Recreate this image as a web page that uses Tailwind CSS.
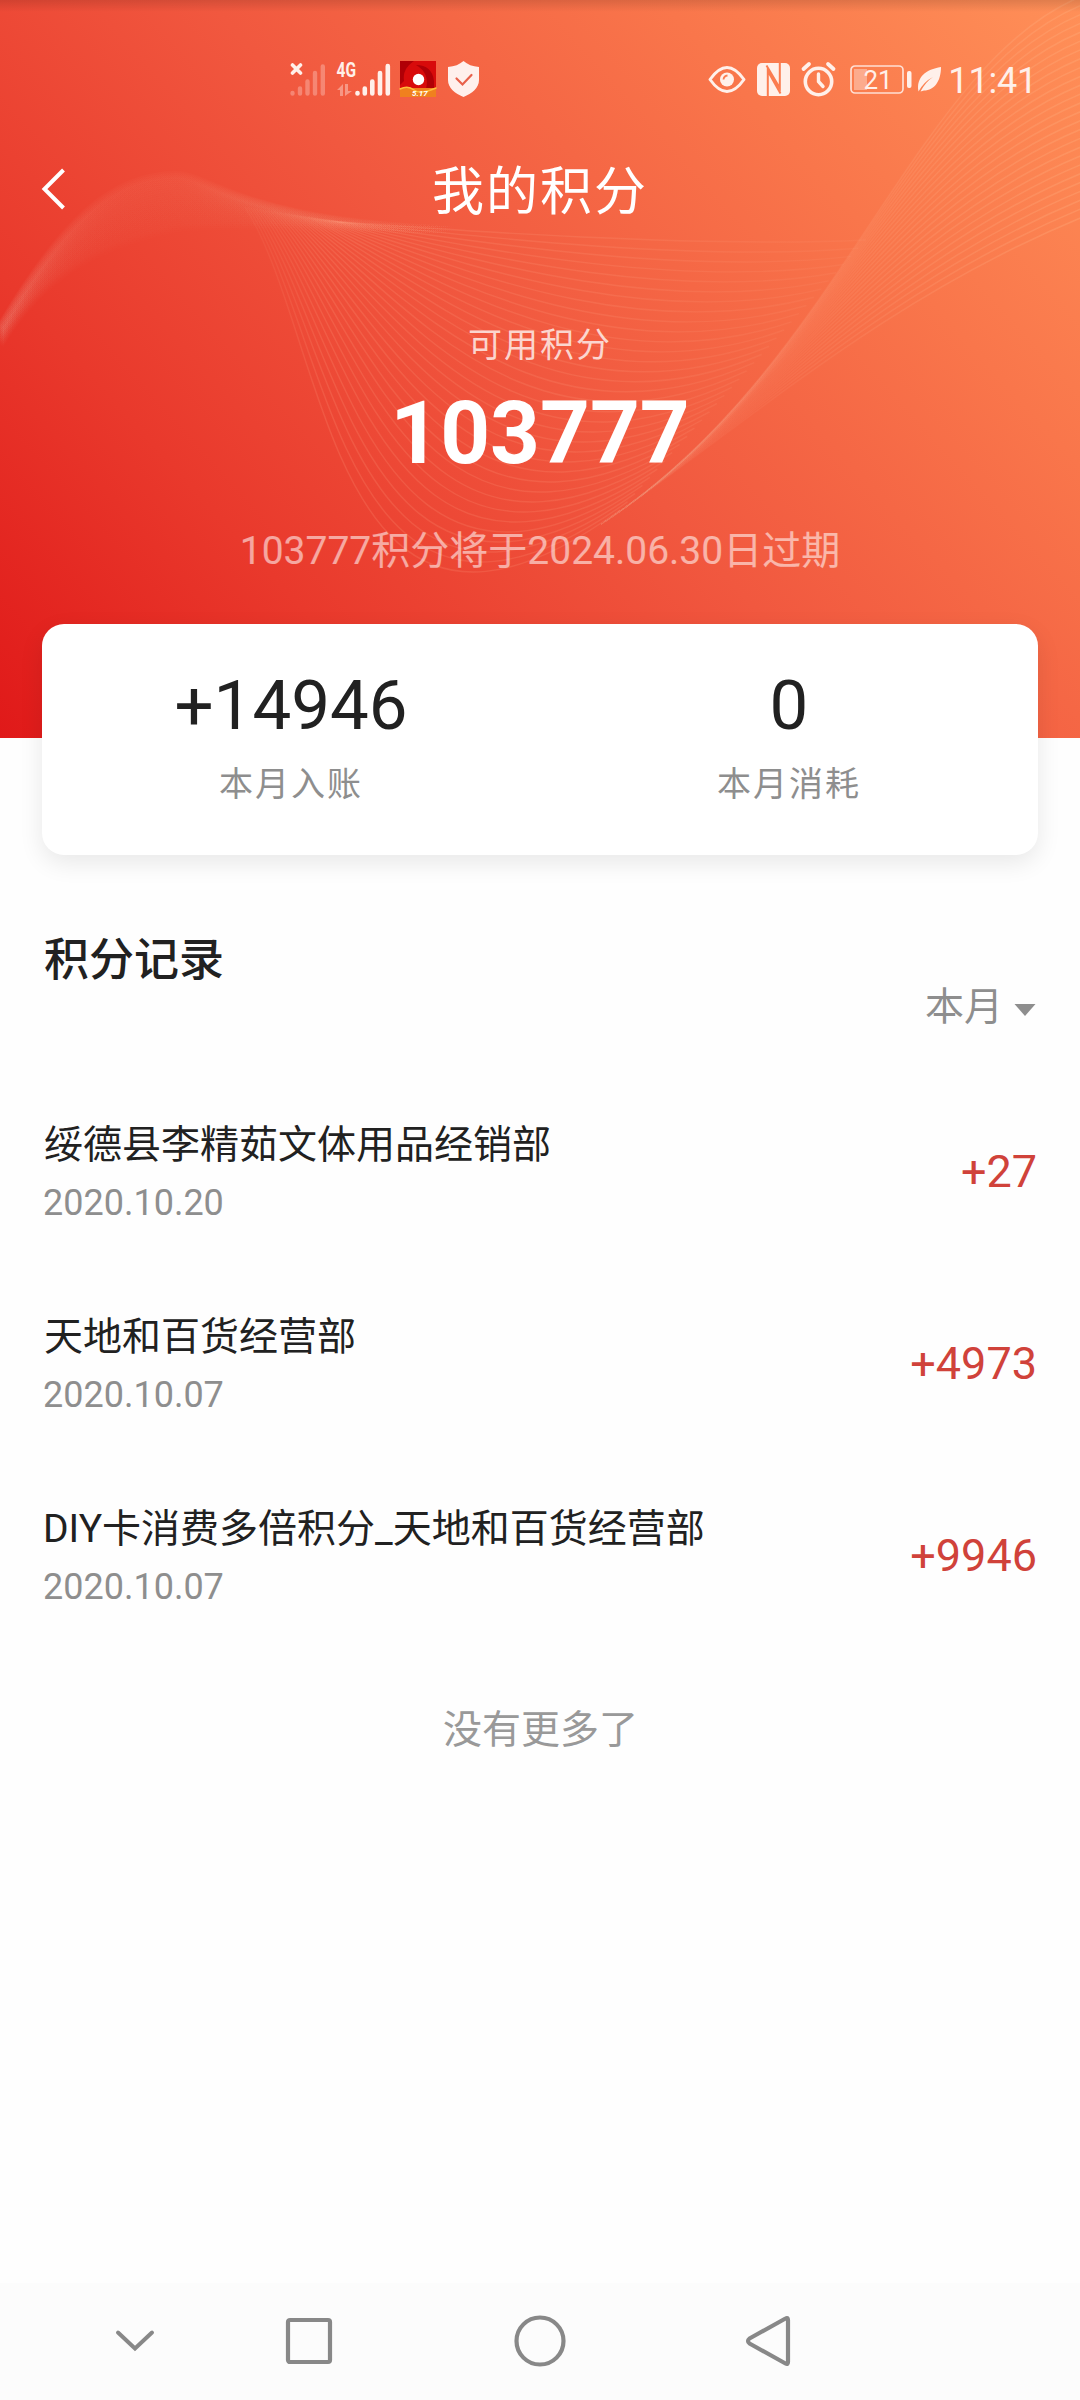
<!DOCTYPE html>
<html lang="zh-CN">
<head>
<meta charset="utf-8">
<title>我的积分</title>
<script src="https://cdn.jsdelivr.net/npm/@tailwindcss/browser@4"></script>
</head>
<body class="bg-white">
<div class="flex h-[2400px] w-[1080px] flex-col overflow-hidden bg-[#fefefe] font-['Roboto','Noto_Sans_CJK_SC',sans-serif] text-[#212121]">

  <header class="relative h-[738px] shrink-0 bg-linear-[48deg,#e01919_0%,#e9392c_24%,#f1583f_50%,#f9764b_76%,#ff9058_100%] text-white">
    <svg id="waves" class="absolute inset-0" width="1080" height="738" fill="none">
      <defs>
        <linearGradient id="ribbon" gradientUnits="userSpaceOnUse" x1="0" y1="0" x2="470" y2="0">
          <stop offset="0" stop-color="#f0a090" stop-opacity=".03"/><stop offset=".4" stop-color="#ff9a80" stop-opacity=".035"/><stop offset=".6" stop-color="#ff9a80" stop-opacity=".03"/><stop offset="1" stop-color="#ff9a80" stop-opacity="0"/>
        </linearGradient>
        <linearGradient id="fan" gradientUnits="userSpaceOnUse" x1="240" y1="0" x2="870" y2="0">
          <stop offset="0" stop-color="#ffa080" stop-opacity=".05"/><stop offset=".14" stop-color="#ffa080" stop-opacity=".2"/><stop offset=".6" stop-color="#ffa888" stop-opacity=".16"/><stop offset="1" stop-color="#ffa888" stop-opacity=".08"/>
        </linearGradient>
        <linearGradient id="sweep" gradientUnits="userSpaceOnUse" x1="600" y1="0" x2="1080" y2="0">
          <stop offset="0" stop-color="#ffb092" stop-opacity=".01"/><stop offset=".35" stop-color="#ffb092" stop-opacity=".08"/><stop offset="1" stop-color="#ffb888" stop-opacity=".26"/>
        </linearGradient>
      </defs>
    </svg>
    <div class="absolute inset-x-0 top-0 h-3 bg-linear-to-b from-black/12 to-transparent"></div>

    <div class="relative flex h-[158px] items-center pr-[43px] pl-[290px] text-[#fff0ea]">
      <svg width="190" height="50" viewBox="0 -6 190 50" fill="none" stroke-linecap="round">
        <path d="M2.5 5l8 8M10.5 5l-8 8" stroke="currentColor" stroke-width="3.6"/>
        <g stroke="currentColor" stroke-width="4.4" opacity=".3">
          <path d="M2.5 33v.5M10 28.500v5M17.500 21.500v12M25 13v20.500M32.800 6.500v27"/>
        </g>
        <text x="46.500" y="17" textLength="19.500" lengthAdjust="spacingAndGlyphs" fill="currentColor" font-size="20" font-weight="700">4G</text>
        <g fill="currentColor" opacity=".4">
          <path d="M47 30l6-6v12h-3v-6zM55 24h3v7h4l-7 5z"/>
        </g>
        <path d="M67.500 33v.5M74.800 28.500v5M82.300 21.500v12M90 13v20.500M97.800 6v27.500" stroke="currentColor" stroke-width="4.600"/>
        <rect x="110" y="1" width="36" height="36" fill="#d80b0b"/>
        <path d="M110 1h14q-12 8-10 20l-4 4zM126 5q16 0 18 16v8h-8q4-16-10-24z" fill="#b00006"/>
        <rect x="110" y="28" width="36" height="9" fill="#f0801e"/>
        <path d="M110 29q8-4 14 1t22-2" stroke="#ffbd3a" stroke-width="1.500"/>
        <circle cx="128.500" cy="19.500" r="5.700" fill="#fff"/>
        <text x="122" y="35.500" fill="#fff" font-size="8" font-weight="700" font-style="italic">5.17</text>
        <path d="M173.500 1c4 3.500 9 5.500 15.500 6v13c0 8-7 13.500-15.500 17-8.500-3.500-15.500-9-15.500-17V7c6.500-.5 11.500-2.500 15.500-6z" fill="#fff0ec"/>
        <path d="M166.500 18.500l6 6 9-9.500" stroke="#e8604a" stroke-width="2.200"/>
      </svg>
      <svg class="ml-auto" width="234" height="38" viewBox="0 0 234 38" fill="none">
        <path d="M2 19.500Q19 -4.500 36 19.500 19 43.500 2 19.500z" stroke="currentColor" stroke-width="3" stroke-linejoin="round"/>
        <circle cx="19" cy="19.500" r="7" fill="currentColor"/>
        <path d="M15.500 19.500q.3-3.600 4-4" stroke="#fb7c50" stroke-width="1.800"/>
        <rect x="49" y="3" width="33" height="33" rx="5" fill="currentColor"/>
        <path d="M59.800 36.500V11L72.500 33.500M71.800 2.500V28L58.500 5.500" stroke="#fb7c50" stroke-width="2"/>
        <circle cx="110.500" cy="21.500" r="13.200" stroke="currentColor" stroke-width="3.600"/>
        <path d="M110.500 14v7.500l4.500 5" stroke="currentColor" stroke-width="3.400" stroke-linecap="round"/>
        <path d="M95.500 9l5.500-5M125.500 9l-5.500-5" stroke="currentColor" stroke-width="3.800" stroke-linecap="round"/>
        <rect x="143" y="6" width="52" height="27" rx="4" stroke="currentColor" stroke-width="1.700" opacity=".85"/>
        <rect x="146" y="9" width="13" height="21" fill="currentColor" opacity=".4"/>
        <text x="170" y="29" text-anchor="middle" fill="currentColor" font-size="26">21</text>
        <rect x="199" y="11" width="4.500" height="17" rx="2" fill="currentColor"/>
        <path d="M210.500 31.500C208 17 218 9.500 233 7c0 14-6.500 23.500-17 23.500l-3.500 1q5-9.500 12.500-14.500-9 4.500-14.500 14.500z" fill="currentColor"/>
      </svg>
      <span class="mt-[4px] ml-[6px] text-[36px] leading-[40px] tracking-[-.2px]">11:41</span>
    </div>

    <div class="relative flex h-[64px] items-center justify-center">
      <svg class="absolute top-[9px] left-[40px]" width="28" height="44" viewBox="0 0 28 44" fill="none"><path d="M23.500 3L4.500 22l19 19" stroke="#fff" stroke-width="4"/></svg>
      <h1 class="mt-[6px] text-[52px] leading-[64px] tracking-[2px]">我的积分</h1>
    </div>

    <div class="relative flex flex-col items-center">
      <p class="mt-[98px] text-[34px] leading-[50px] tracking-[2px] text-white/75">可用积分</p>
      <p class="mt-[13px] text-[87px] leading-[100px] font-bold">103777</p>
      <p class="mt-[43px] text-[39px] leading-[50px] text-white/55">103777积分将于2024.06.30日过期</p>
    </div>
  </header>

  <section class="relative mx-[42px] -mt-[114px] grid h-[231px] shrink-0 grid-cols-2 content-start rounded-[22px] bg-white pt-[41px] text-center shadow-[0_8px_24px_rgba(0,0,0,0.09)]">
    <div>
      <p class="text-[69px] leading-[82px]">+14946</p>
      <p class="mt-[12px] text-[34px] leading-[50px] tracking-[2px] text-[#8e8e8e]">本月入账</p>
    </div>
    <div>
      <p class="text-[69px] leading-[82px]">0</p>
      <p class="mt-[12px] text-[34px] leading-[50px] tracking-[2px] text-[#8e8e8e]">本月消耗</p>
    </div>
  </section>

  <main class="flex flex-1 flex-col pr-[43px] pl-[44px]">
    <h2 class="mt-[76px] text-[45px] leading-[60px] font-medium">积分记录</h2>
    <div class="-mt-[9px] flex h-[50px] items-center justify-end text-[39px] leading-[50px] text-[#8e8e8e]">
      <span>本月</span>
      <svg class="mt-[6px] mr-[1px] ml-[11px]" width="22" height="12" viewBox="0 0 22 12"><path d="M.5 0h21L11 12z" fill="#8e8e8e"/></svg>
    </div>
    <ul class="mt-[83px]">
      <li class="flex h-[192px] items-start justify-between">
        <div>
          <p class="mt-[5px] text-[39px] leading-[50px]">绥德县李精茹文体用品经销部</p>
          <p class="-ml-[1px] mt-[12px] text-[36px] leading-[42px] text-[#8e8e8e]">2020.10.20</p>
        </div>
        <span class="mt-[27px] text-[45px] leading-[60px] text-[#d0423a]">+27</span>
      </li>
      <li class="flex h-[192px] items-start justify-between">
        <div>
          <p class="mt-[5px] text-[39px] leading-[50px]">天地和百货经营部</p>
          <p class="-ml-[1px] mt-[12px] text-[36px] leading-[42px] text-[#8e8e8e]">2020.10.07</p>
        </div>
        <span class="mt-[27px] text-[45px] leading-[60px] text-[#d0423a]">+4973</span>
      </li>
      <li class="flex h-[192px] items-start justify-between">
        <div>
          <p class="-ml-[1px] mt-[5px] text-[39px] leading-[50px]">DIY卡消费多倍积分_天地和百货经营部</p>
          <p class="-ml-[1px] mt-[12px] text-[36px] leading-[42px] text-[#8e8e8e]">2020.10.07</p>
        </div>
        <span class="mt-[27px] text-[45px] leading-[60px] text-[#d0423a]">+9946</span>
      </li>
    </ul>
    <p class="mt-[14px] text-center text-[39px] leading-[50px] text-[#999]">没有更多了</p>
  </main>

  <nav class="flex h-[117px] shrink-0 items-center bg-[#fcfcfc] pb-[2px] pl-[114px] text-[#888]">
    <svg width="42" height="26" viewBox="0 0 42 26" fill="none"><path d="M4 4.500l17 16 17-16" stroke="currentColor" stroke-width="4" stroke-linecap="round"/></svg>
    <svg class="ml-[128px]" width="50" height="50" viewBox="0 0 50 50" fill="none"><rect x="4" y="4" width="42" height="42" rx="2" stroke="currentColor" stroke-width="4.200"/></svg>
    <svg class="ml-[179px]" width="54" height="54" viewBox="0 0 54 54" fill="none"><circle cx="27" cy="27" r="23.500" stroke="currentColor" stroke-width="4.200"/></svg>
    <svg class="ml-[178px]" width="48" height="54" viewBox="0 0 48 54" fill="none"><path d="M43 6v42q0 3-2.500 1.500L4.500 29.500q-3-2.500 0-5l36-20Q43 3 43 6z" stroke="currentColor" stroke-width="4.200" stroke-linejoin="round"/></svg>
  </nav>
</div>

<script>
  // Header waves: each band is a family of curves blended between two outlines.
  const bands = [
    { id: 'ribbon', n: 26, w: 8, a: [0,327, 60,225, 110,175, 176,175, 210,175, 250,226, 470,229], b: [0,345, 50,262, 120,240, 176,228, 240,222, 300,230, 470,232] },
    { id: 'fan', n: 34, w: 1.4, a: [340,222, 450,230, 700,248, 866,240], b: [245,207, 330,340, 330,720, 620,510] },
    { id: 'sweep', n: 26, w: 1.5, a: [600,525, 840,370, 915,60, 1085,-5], b: [600,525, 740,430, 880,300, 1085,216] }
  ];
  const svg = document.getElementById('waves');
  for (const s of bands) {
    for (let i = 0; i < s.n; i++) {
      const t = i / (s.n - 1);
      const p = s.a.map((v, k) => (v + (s.b[k] - v) * t).toFixed(1));
      const path = document.createElementNS('http://www.w3.org/2000/svg', 'path');
      path.setAttribute('d', 'M' + p.slice(0, 2).join(' ') + 'C' + p.slice(2).join(' '));
      path.setAttribute('stroke', 'url(#' + s.id + ')');
      path.setAttribute('stroke-width', s.w);
      if (s.id === 'ribbon') path.setAttribute('opacity', (1 - t * 0.7).toFixed(2));
      svg.appendChild(path);
    }
  }
</script>
</body>
</html>
